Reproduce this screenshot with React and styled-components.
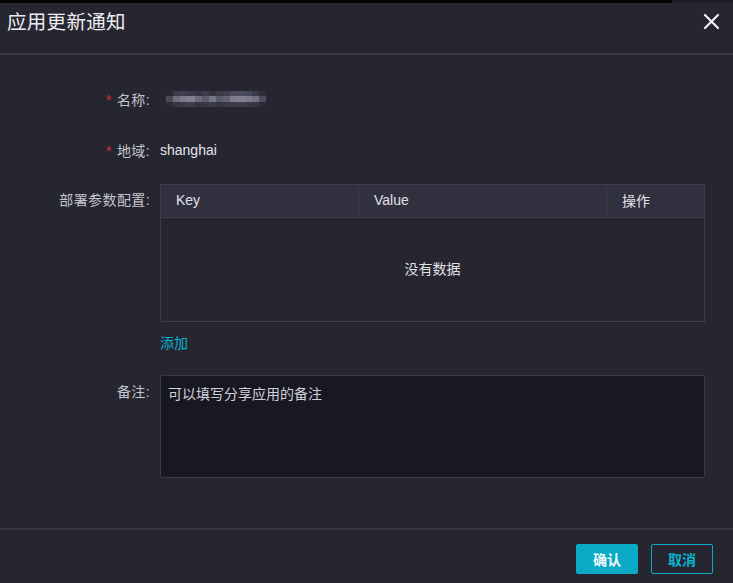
import styled, { createGlobalStyle } from "styled-components";

const Global = createGlobalStyle`
  html, body {
    margin: 0;
    padding: 0;
    background: #262631;
  }
  * {
    box-sizing: border-box;
  }
`;

const Dialog = styled.div`
  width: 733px;
  height: 583px;
  background: #262631;
  display: flex;
  flex-direction: column;
  font-family: "Liberation Sans", "Noto Sans CJK SC", sans-serif;
  color: #dcdce2;
  overflow: hidden;
`;

const TopStrip = styled.div`
  height: 3px;
  display: flex;
`;

const StripPart = styled.div`
  height: 100%;
  width: ${(p) => p.$w};
  flex: ${(p) => (p.$grow ? 1 : "none")};
  background: ${(p) => p.$bg};
`;

const Header = styled.div`
  height: 52px;
  display: flex;
  align-items: flex-start;
  justify-content: space-between;
  padding: 5px 12px 0 7px;
  border-bottom: 2px solid #383846;
`;

const Title = styled.h3`
  margin: 0;
  font-size: 19.5px;
  line-height: 28px;
  font-weight: 400;
  color: #ececf0;
  letter-spacing: 0.3px;
`;

const Close = styled.button`
  all: unset;
  width: 20px;
  height: 20px;
  margin-top: 3px;
  display: flex;
  align-items: center;
  justify-content: center;
  cursor: pointer;
`;

const Body = styled.div`
  flex: 1;
  padding: 34px 28px 0 0;
  display: flex;
  flex-direction: column;
`;

const Row = styled.div`
  display: flex;
  align-items: ${(p) => (p.$top ? "flex-start" : "center")};
  margin-bottom: ${(p) => p.$mb || 0}px;
  margin-top: ${(p) => p.$mt || 0}px;
`;

const Label = styled.div`
  width: 150px;
  flex: none;
  text-align: right;
  font-size: 14px;
  color: #c4c4cc;
  padding-top: ${(p) => p.$pt || 0}px;
  letter-spacing: 0.4px;
`;

const Star = styled.span`
  color: #e0283a;
  margin-right: 5px;
  font-size: 14px;
`;

const Value = styled.div`
  margin-left: 10px;
  font-size: 14px;
  color: #e4e4ea;
`;

const Blur = styled.div`
  margin-left: 16px;
  width: 100px;
  height: 16px;
  display: grid;
  grid-template-columns: repeat(14, 1fr);
  grid-template-rows: repeat(3, 1fr);
`;

const Pix = styled.div`
  background: ${(p) => p.$c};
`;

const Field = styled.div`
  margin-left: 10px;
  flex: 1;
`;

const Table = styled.div`
  border: 1px solid #3c3c4a;
  height: 138px;
  display: flex;
  flex-direction: column;
`;

const THead = styled.div`
  height: 33px;
  display: grid;
  grid-template-columns: 197px 248px 1fr;
  background: #30303f;
  border-bottom: 1px solid #3c3c4a;
`;

const Th = styled.div`
  display: flex;
  align-items: center;
  padding-left: ${(p) => p.$pl || 15}px;
  padding-bottom: 2px;
  font-size: 14px;
  color: #e2e2e8;
  border-left: ${(p) => (p.$first ? "none" : "1px solid #3c3c4a")};
`;

const Empty = styled.div`
  flex: 1;
  display: flex;
  align-items: center;
  justify-content: center;
  font-size: 14px;
  color: #e0e0e6;
  padding-bottom: 4px;
`;

const AddLink = styled.a`
  display: inline-block;
  align-self: flex-start;
  margin: 10px 0 0 160px;
  font-size: 14px;
  color: #0ab4d0;
  cursor: pointer;
`;

const Textarea = styled.textarea`
  display: block;
  width: 100%;
  height: 103px;
  resize: none;
  background: #181822;
  border: 1px solid #3a3a48;
  border-radius: 2px;
  padding: 7px 7px;
  font-family: "Liberation Sans", "Noto Sans CJK SC", sans-serif;
  font-size: 14px;
  color: #e0e0e6;
  outline: none;

  &::placeholder {
    color: #d0d0d8;
  }
`;

const Footer = styled.div`
  height: 55px;
  border-top: 2px solid #383846;
  display: flex;
  align-items: flex-start;
  justify-content: flex-end;
  gap: 13px;
  padding: 14px 20px 0 0;
`;

const Button = styled.button`
  all: unset;
  width: 62px;
  height: 30px;
  box-sizing: border-box;
  display: flex;
  align-items: center;
  justify-content: center;
  border-radius: 2px;
  font-size: 14px;
  font-weight: 600;
  cursor: pointer;
  background: ${(p) => (p.$primary ? "#0aa9c6" : "transparent")};
  border: 1px solid #0aa9c6;
  color: ${(p) => (p.$primary ? "#f4fbfd" : "#0ab4d0")};
`;

const mosaic = [
  ["#2a2a36", "#3a3a48", "#3e3e4c", "#3a3a48", "#343442", "#3c3c4a", "#34343f", "#3a3a48", "#3e3e4c", "#4a4a58", "#4a4a58", "#46465a", "#3a3a48", "#2e2e3a"],
  ["#4a4a58", "#6e6e7c", "#7a7a88", "#80808e", "#6c6c7a", "#5a5a68", "#74748a", "#5a5a68", "#626270", "#7c7c8a", "#80808e", "#7a7a88", "#707080", "#4c4c5a"],
  ["#2c2c38", "#363644", "#3a3a48", "#3e3e4c", "#343442", "#383846", "#3a3a48", "#343442", "#383846", "#3a3a48", "#3c3c4a", "#383846", "#363644", "#2c2c38"],
];

export default function App() {
  return (
    <Dialog>
      <Global />
      <TopStrip>
        <StripPart $w="672px" $bg="#050507" />
        <StripPart $grow $bg="#1d1d22" />
      </TopStrip>
      <Header>
        <Title>应用更新通知</Title>
        <Close aria-label="close">
          <svg width="17" height="17" viewBox="0 0 17 17">
            <path d="M2 2 L15 15 M15 2 L2 15" stroke="#f0f0f4" strokeWidth="2.2" strokeLinecap="round" />
          </svg>
        </Close>
      </Header>
      <Body>
        <Row $mb={31}>
          <Label>
            <Star>*</Star>名称:
          </Label>
          <Blur>
            {mosaic.flat().map((c, i) => (
              <Pix key={i} $c={c} />
            ))}
          </Blur>
        </Row>
        <Row $mb={24}>
          <Label>
            <Star>*</Star>地域:
          </Label>
          <Value>shanghai</Value>
        </Row>
        <Row $top>
          <Label $pt={5}>部署参数配置:</Label>
          <Field>
            <Table>
              <THead>
                <Th $first>Key</Th>
                <Th>Value</Th>
                <Th $pl={15}>操作</Th>
              </THead>
              <Empty>没有数据</Empty>
            </Table>
          </Field>
        </Row>
        <AddLink>添加</AddLink>
        <Row $top $mt={23}>
          <Label $pt={6}>备注:</Label>
          <Field>
            <Textarea placeholder="可以填写分享应用的备注" />
          </Field>
        </Row>
      </Body>
      <Footer>
        <Button $primary>确认</Button>
        <Button>取消</Button>
      </Footer>
    </Dialog>
  );
}
